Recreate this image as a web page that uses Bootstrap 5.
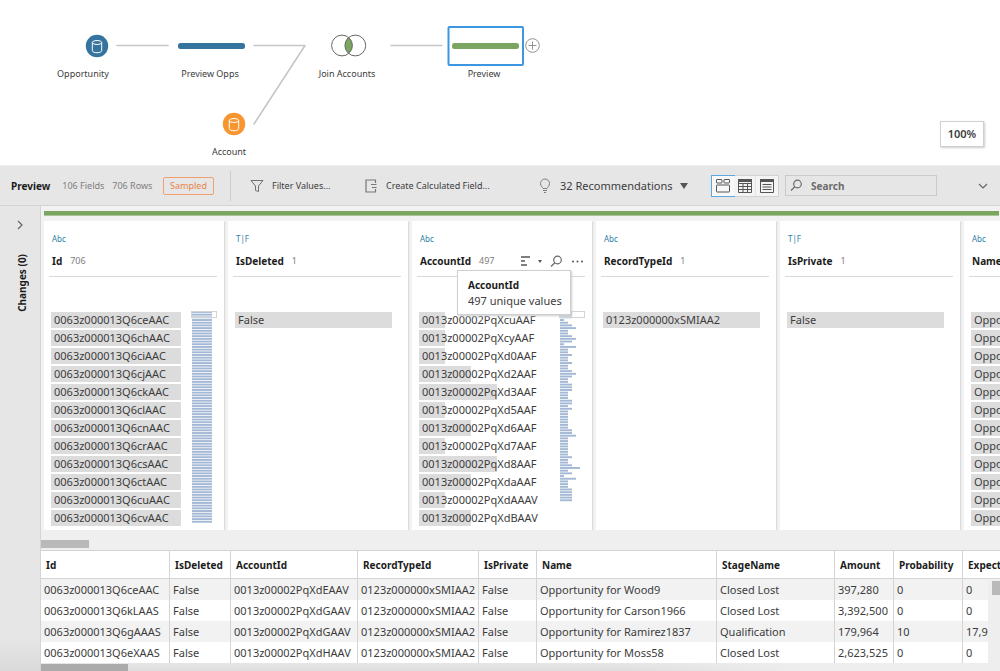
<!DOCTYPE html>
<html lang="en">
<head>
<meta charset="utf-8">
<meta name="viewport" content="width=device-width, initial-scale=1">
<title>Flow – Preview</title>
<link href="https://cdn.jsdelivr.net/npm/bootstrap@5.3.0/dist/css/bootstrap.min.css" rel="stylesheet">
<style>
:root{--chrome:#e6e6e6;--line:#d4d4d4;--green:#7ba661;--blue:#35749f;--ink:#3c3c3c}
body{font-family:"Noto Sans","Open Sans",sans-serif;font-size:11px;line-height:16px;color:var(--ink);background:#fff}
button{font-family:inherit;color:inherit;background:none;border:0;padding:0}
svg{display:block;flex:none}
.t9{font-size:9px}
.strong{font-weight:700;font-size:10px;color:#1c1c1c}
.dim{color:#7e7e7e;font-size:9px}
/* flow canvas */
.flow{height:166px;border-bottom:1px solid #f0f0f0}
.node-label{position:absolute;width:100px;text-align:center;font-size:9px;line-height:14px}
.zoom-box{position:absolute;right:16px;bottom:18px;border:1px solid #d0d0d0;box-shadow:1px 1px 2px #ccc;background:#fff;width:44px;height:26px;font-size:11px;font-weight:600}
/* toolbar */
.bar{height:40px;background:var(--chrome);border-bottom:1px solid var(--line);padding:0 12px 0 11px}
.summary{width:220px;height:30px;border-right:1px solid #cdcdcd;margin-right:19px}
.tag{border:1px solid #f0a070;border-radius:2px;color:#ea8348;font-size:9px;width:51px;height:18px;line-height:16px;text-align:center}
.act-filter{width:114px}.act-calc{width:175px}.act-recs{width:172px}
.views{border:1px solid #d2d2d2;height:22px;background:#fff;margin-right:6px}
.views button{width:22px;height:20px;background:#f4f4f4;border-right:1px solid #e4e4e4}
.views button:last-child{border-right:0}
.views button.active{outline:1px solid #5ba8e2;background:#f8f8f8;border-right:0}
.find{width:152px;height:21px;border:1px solid #cacaca}
.find input{border:0;background:none;outline:0;font-size:10px;font-weight:700;width:110px;padding:0;line-height:16px}
.find input::placeholder{color:#6c6c6c;opacity:1}
/* changes rail */
.rail{width:41px;flex:none;border-right:1px solid var(--line);background:linear-gradient(to top,#d9d9d9,var(--chrome) 32px);padding-top:14px}
.vertical{writing-mode:vertical-rl;transform:rotate(180deg)}
/* profile cards */
.workspace{min-width:0}
.profile{background:#f2f2f2;padding:5px 0 0 3px}
.stripe{height:5px;background:var(--green);border-bottom:1px solid #a9c69a;margin:0 1px 5px 0}
.field{width:180px;flex:none;height:309px;background:#fff;box-shadow:1px 1px 1px #dadada;padding:10px 7px 0 5px;position:relative}
.kind{font-size:8px;line-height:16px;color:#2f7ea6;padding-left:3px}
.field header{height:30px;border-bottom:1px solid #d9d9d9;padding:1px 1px 2px 3px;margin-bottom:35px}
.values{margin:0;padding:0 0 0 2px;list-style:none;flex:none}
.values li{width:130px;height:16px;line-height:16px;margin-bottom:2px;padding-left:3px;white-space:nowrap;background:linear-gradient(#dcdcdc,#dcdcdc) no-repeat 0 0/var(--w,130px) 100%}
.w1{--w:26px}.w2{--w:52px}.w3{--w:78px}
.values li.wf{--w:157px;width:157px}
.map{position:relative;margin-top:-1px;width:26px}
.map svg{margin-left:1px}
.map::before{content:"";position:absolute;inset:0 0 auto 0;height:7px;border:1px solid #d4d4d4}
.tip{position:absolute;left:45px;top:49px;width:114px;height:45px;background:#fff;border:1px solid #cfcfcf;box-shadow:1px 1px 2px #ccc;padding:6px 10px;white-space:nowrap;z-index:2}
.hscroll{height:20px;background:#efefef;padding-top:10px}
.thumb{height:8px;background:#b9b9b9}
/* data grid */
.grid table{table-layout:fixed;border-collapse:separate;border-spacing:0;width:1022px}
.grid th{height:29px;border-top:1px solid var(--line);border-bottom:1px solid var(--line);padding:0 0 0 5px;color:#1c1c1c;font-size:10px;font-weight:700}
.grid td{height:21px;padding:1px 0 0 3px;line-height:20px}
.grid th,.grid td{border-right:1px solid var(--line);white-space:nowrap;overflow:hidden}
.grid tbody tr:nth-child(odd){background:#f2f2f2}
.vscroll{position:absolute;right:0;top:30px;bottom:0;width:12px;background:#eee;padding:1px 0 0 4px}
.vscroll div{height:14px;background:#b9b9b9}
.foot{min-height:7px;background:linear-gradient(90deg,transparent 60%,#eee 80%),linear-gradient(#e6e6e6,#dcdcdc);padding-top:1px}
.foot .thumb{background:#ababab}
</style>
</head>
<body class="d-flex flex-column min-vh-100 overflow-hidden">

<section class="flow position-relative flex-shrink-0">
  <svg width="600" height="164" fill="none">
    <g stroke="#c6c6c6" stroke-width="1.600" stroke-linecap="round" stroke-linejoin="round">
      <path d="M117 45.500h51M254 45.500h51L254 124M391 45.500h51"/>
    </g>
    <circle cx="97" cy="46" r="11.200" fill="#35749f"/>
    <circle cx="234" cy="124" r="11.200" fill="#f7962f"/>
    <g stroke="#fff" stroke-width="1">
      <ellipse cx="97" cy="42.500" rx="4.700" ry="2"/><path d="M92.300 42.500v8c0 3 9.400 3 9.400 0v-8"/>
      <ellipse cx="234" cy="120.500" rx="4.700" ry="2"/><path d="M229.300 120.500v8c0 3 9.400 3 9.400 0v-8"/>
    </g>
    <rect x="178" y="43" width="67" height="6" rx="2.500" fill="#35749f"/>
    <path d="M348.700 37.300a10.500 10.500 0 0 1 0 16a10.500 10.500 0 0 1 0-16z" fill="#7ba661"/>
    <g stroke="#666" stroke-width="1"><circle cx="342" cy="45.500" r="10.400"/><circle cx="355.300" cy="45.500" r="10.400"/></g>
    <rect x="448.500" y="27" width="74.500" height="38" rx="1" stroke="#3d97e0" stroke-width="2"/>
    <rect x="452" y="43" width="67" height="6" rx="2.500" fill="#7ba661"/>
    <circle cx="532.500" cy="45.500" r="6.800" stroke="#929292"/><path d="M528.500 45.500h8M532.500 41.500v8" stroke="#929292"/>
  </svg>
  <div class="node-label" style="left:33px;top:67px">Opportunity</div>
  <div class="node-label" style="left:160px;top:67px">Preview Opps</div>
  <div class="node-label" style="left:179px;top:145px">Account</div>
  <div class="node-label" style="left:297px;top:67px">Join Accounts</div>
  <div class="node-label" style="left:434px;top:67px">Preview</div>
  <button class="zoom-box">100%</button>
</section>

<div class="bar d-flex align-items-center flex-shrink-0 text-nowrap">
  <div class="summary d-flex align-items-center">
    <span class="strong">Preview</span>
    <span class="dim ms-2 ps-1">106 Fields</span>
    <span class="dim ms-2">706 Rows</span>
    <span class="tag ms-auto me-3">Sampled</span>
  </div>
  <button class="act-filter d-flex align-items-center gap-2 t9">
    <svg width="14" height="14" fill="none" stroke="#707070"><path d="M1 1.500h12L8.500 7v5.500l-3-1V7z"/></svg>Filter Values...
  </button>
  <button class="act-calc d-flex align-items-center gap-2 t9">
    <svg width="14" height="14" fill="none" stroke="#777" stroke-width="1.200"><path d="M11.500 4V1H2v12h9.500v-3M7 5.500h5.500M8 8.500h4.500"/></svg>Create Calculated Field...
  </button>
  <button class="act-recs d-flex align-items-center gap-2">
    <svg width="13" height="16" fill="none" stroke="#808080"><path d="M4 10.500C3.500 9 1.500 8 1.500 5.500a4.500 4.500 0 0 1 9 0C10.500 8 8.500 9 8 10.500zM4 12.500h4M5 14.500h2"/></svg>32 Recommendations
    <svg width="8" height="6"><path d="M0 0h8L4 6z" fill="#555"/></svg>
  </button>
  <div class="views d-flex" role="group" aria-label="View">
    <button class="active d-flex align-items-center justify-content-center" aria-label="Profile"><svg width="14" height="14" fill="none" stroke="#555"><rect x=".5" y=".5" width="5.500" height="3.500" rx=".5"/><rect x="8" y=".5" width="5.500" height="3.500" rx=".5"/><rect x=".5" y="6" width="13" height="7" rx=".5"/></svg></button>
    <button class="d-flex align-items-center justify-content-center" aria-label="Grid"><svg width="14" height="14" fill="none" stroke="#555"><path d="M.5.500h13v13H.5zM.5 4.500h13M.5 7.500h13M.5 10.500h13M5 4v9.500M9.500 4v9.500"/><path d="M0 1.500h14" stroke-width="3"/></svg></button>
    <button class="d-flex align-items-center justify-content-center" aria-label="List"><svg width="14" height="14" fill="none" stroke="#555"><path d="M.5.500h13v13H.5zM2.500 5.500h9M2.500 8h9M2.500 10.500h9"/><path d="M0 1.500h14" stroke-width="3"/></svg></button>
  </div>
  <label class="find d-flex align-items-center gap-2 px-1">
    <svg width="13" height="13" fill="none" stroke="#6c6c6c" stroke-width="1.200"><circle cx="7.500" cy="5" r="3.800"/><path d="M4.800 7.800L1 11.500"/></svg>
    <input type="text" placeholder="Search" aria-label="Search fields">
  </label>
  <button class="ms-auto" aria-label="Collapse"><svg width="10" height="8" fill="none" stroke="#666" stroke-width="1.200"><path d="M1 2l4 4 4-4"/></svg></button>
</div>

<div class="d-flex flex-grow-1">
  <aside class="rail d-flex flex-column align-items-center">
    <button class="mb-4" aria-label="Expand"><svg width="8" height="10" fill="none" stroke="#666" stroke-width="1.200"><path d="M2 1l4 4-4 4"/></svg></button>
    <span class="vertical strong ms-1">Changes (0)</span>
  </aside>

  <main class="workspace flex-grow-1 d-flex flex-column overflow-hidden">
    <section class="profile overflow-hidden">
      <div class="stripe"></div>
      <div class="d-flex gap-1">
        <article class="field">
          <div class="kind">Abc</div>
          <header class="d-flex align-items-center gap-2"><span class="strong">Id</span><span class="dim">706</span></header>
          <div class="d-flex justify-content-between">
            <ul class="values">
              <li>0063z000013Q6ceAAC</li><li>0063z000013Q6chAAC</li><li>0063z000013Q6ciAAC</li><li>0063z000013Q6cjAAC</li>
              <li>0063z000013Q6ckAAC</li><li>0063z000013Q6clAAC</li><li>0063z000013Q6cnAAC</li><li>0063z000013Q6crAAC</li>
              <li>0063z000013Q6csAAC</li><li>0063z000013Q6ctAAC</li><li>0063z000013Q6cuAAC</li><li>0063z000013Q6cvAAC</li>
            </ul>
            <div class="map" data-map="id"></div>
          </div>
        </article>
        <article class="field">
          <div class="kind">T|F</div>
          <header class="d-flex align-items-center gap-2"><span class="strong">IsDeleted</span><span class="dim">1</span></header>
          <ul class="values"><li class="wf">False</li></ul>
        </article>
        <article class="field">
          <div class="kind">Abc</div>
          <header class="d-flex align-items-center gap-2"><span class="strong">AccountId</span><span class="dim">497</span>
            <span class="ms-auto d-flex align-items-center gap-2">
              <button aria-label="Sort"><svg width="10" height="10" fill="none" stroke="#555" stroke-width="1.500"><path d="M1 1h9M1 5h4M1 9h6"/></svg></button>
              <button aria-label="Sort options"><svg width="4" height="3"><path d="M0 0h4L2 3z" fill="#555"/></svg></button>
              <button aria-label="Search values"><svg width="13" height="13" fill="none" stroke="#666" stroke-width="1.200"><circle cx="7.500" cy="5" r="3.800"/><path d="M4.800 7.800L1 11.500"/></svg></button>
              <button aria-label="More"><svg width="13" height="3" fill="#555"><circle cx="2" cy="1.500" r="1"/><circle cx="6.500" cy="1.500" r="1"/><circle cx="11" cy="1.500" r="1"/></svg></button>
            </span>
          </header>
          <div class="tip" role="tooltip"><div class="strong">AccountId</div>497 unique values</div>
          <div class="d-flex justify-content-between">
            <ul class="values">
              <li class="w1">0013z00002PqXcuAAF</li><li class="w1">0013z00002PqXcyAAF</li><li class="w1">0013z00002PqXd0AAF</li><li class="w2">0013z00002PqXd2AAF</li>
              <li class="w3">0013z00002PqXd3AAF</li><li class="w1">0013z00002PqXd5AAF</li><li class="w2">0013z00002PqXd6AAF</li><li class="w1">0013z00002PqXd7AAF</li>
              <li class="w3">0013z00002PqXd8AAF</li><li class="w2">0013z00002PqXdaAAF</li><li class="w1">0013z00002PqXdAAAV</li><li class="w2">0013z00002PqXdBAAV</li>
            </ul>
            <div class="map" data-map="account"></div>
          </div>
        </article>
        <article class="field">
          <div class="kind">Abc</div>
          <header class="d-flex align-items-center gap-2"><span class="strong">RecordTypeId</span><span class="dim">1</span></header>
          <ul class="values"><li class="wf">0123z000000xSMIAA2</li></ul>
        </article>
        <article class="field">
          <div class="kind">T|F</div>
          <header class="d-flex align-items-center gap-2"><span class="strong">IsPrivate</span><span class="dim">1</span></header>
          <ul class="values"><li class="wf">False</li></ul>
        </article>
        <article class="field">
          <div class="kind">Abc</div>
          <header class="d-flex align-items-center gap-2"><span class="strong">Name</span></header>
          <ul class="values">
            <li>Opportunity</li><li>Opportunity</li><li>Opportunity</li><li>Opportunity</li><li>Opportunity</li><li>Opportunity</li>
            <li>Opportunity</li><li>Opportunity</li><li>Opportunity</li><li>Opportunity</li><li>Opportunity</li><li>Opportunity</li>
          </ul>
        </article>
      </div>
    </section>
    <div class="hscroll"><div class="thumb" style="width:48px"></div></div>

    <section class="grid position-relative overflow-hidden">
      <table>
        <colgroup><col style="width:129px"><col style="width:61px"><col style="width:127px"><col style="width:121px"><col style="width:58px"><col style="width:180px"><col style="width:118px"><col style="width:59px"><col style="width:69px"><col style="width:100px"></colgroup>
        <thead><tr><th>Id</th><th>IsDeleted</th><th>AccountId</th><th>RecordTypeId</th><th>IsPrivate</th><th>Name</th><th>StageName</th><th>Amount</th><th>Probability</th><th>ExpectedRevenue</th></tr></thead>
        <tbody>
          <tr><td>0063z000013Q6ceAAC</td><td>False</td><td>0013z00002PqXdEAAV</td><td>0123z000000xSMIAA2</td><td>False</td><td>Opportunity for Wood9</td><td>Closed Lost</td><td>397,280</td><td>0</td><td>0</td></tr>
          <tr><td>0063z000013Q6kLAAS</td><td>False</td><td>0013z00002PqXdGAAV</td><td>0123z000000xSMIAA2</td><td>False</td><td>Opportunity for Carson1966</td><td>Closed Lost</td><td>3,392,500</td><td>0</td><td>0</td></tr>
          <tr><td>0063z000013Q6gAAAS</td><td>False</td><td>0013z00002PqXdGAAV</td><td>0123z000000xSMIAA2</td><td>False</td><td>Opportunity for Ramirez1837</td><td>Qualification</td><td>179,964</td><td>10</td><td>17,996</td></tr>
          <tr><td>0063z000013Q6eXAAS</td><td>False</td><td>0013z00002PqXdHAAV</td><td>0123z000000xSMIAA2</td><td>False</td><td>Opportunity for Moss58</td><td>Closed Lost</td><td>2,623,525</td><td>0</td><td>0</td></tr>
        </tbody>
      </table>
      <div class="vscroll"><div></div></div>
    </section>
    <div class="foot flex-grow-1"><div class="thumb" style="width:87px"></div></div>
  </main>
</div>

<script>
// Overview histograms beside long value lists: one bar per row group.
const maps = {
  id: Array(79).fill(20),
  account: [12,12,12,4,8,12,16,8,8,12,16,12,4,16,8,8,12,8,8,12,8,8,12,16,12,8,8,12,12,12,8,8,8,12,12,8,12,
    8,8,8,8,8,8,8,12,12,16,8,8,8,8,8,8,8,12,8,8,12,20,8,12,4,16,8,8,8,12,12,12,12,12]
};
document.querySelectorAll('[data-map]').forEach(el => {
  const d = maps[el.dataset.map], pitch = 2.69;
  const bars = d.map((w, i) => `<rect y="${(i * pitch).toFixed(2)}" width="${w}" height="1.9"/>`).join('');
  el.innerHTML = `<svg width="24" height="${Math.ceil(d.length * pitch)}" fill="#a3b8d4">${bars}</svg>`;
});
</script>
<script src="https://cdn.jsdelivr.net/npm/bootstrap@5.3.0/dist/js/bootstrap.bundle.min.js"></script>
</body>
</html>
